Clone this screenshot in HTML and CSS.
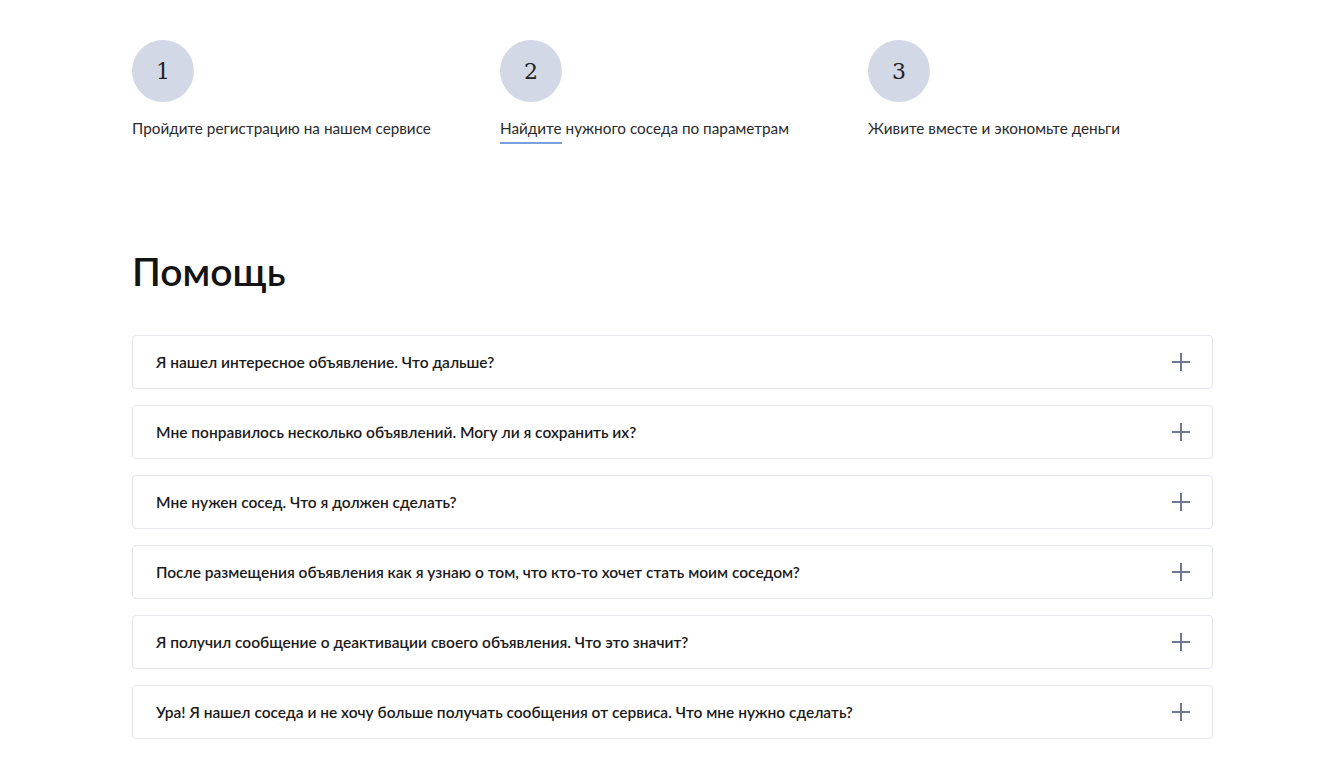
FILE: index.html
```html
<!DOCTYPE html>
<html lang="ru">
<head>
    <meta charset="UTF-8">
    <meta name="viewport" content="width=device-width, initial-scale=1.0">
    <title>Помощь</title>
    <link rel="stylesheet" href="styles.css">
</head>
<body>
    <div class="wrap">
        <div class="steps">
            <div class="step">
                <div class="num">1</div>
                <p>Пройдите регистрацию на нашем сервисе</p>
            </div>
            <div class="step">
                <div class="num">2</div>
                <p><a href="#">Найдите</a> нужного соседа по параметрам</p>
            </div>
            <div class="step">
                <div class="num">3</div>
                <p>Живите вместе и экономьте деньги</p>
            </div>
        </div>

        <h1>Помощь</h1>

        <div class="faq">
            <div class="item"><span>Я нашел интересное объявление. Что дальше?</span><i class="plus"></i></div>
            <div class="item"><span>Мне понравилось несколько объявлений. Могу ли я сохранить их?</span><i class="plus"></i></div>
            <div class="item"><span>Мне нужен сосед. Что я должен сделать?</span><i class="plus"></i></div>
            <div class="item"><span>После размещения объявления как я узнаю о том, что кто-то хочет стать моим соседом?</span><i class="plus"></i></div>
            <div class="item"><span>Я получил сообщение о деактивации своего объявления. Что это значит?</span><i class="plus"></i></div>
            <div class="item"><span>Ура! Я нашел соседа и не хочу больше получать сообщения от сервиса. Что мне нужно сделать?</span><i class="plus"></i></div>
        </div>
    </div>
</body>
</html>
```

FILE: styles.css
```css
body{
    margin: 0;
    background: #fff;
    font-family: Lato, "Open Sans", sans-serif;
    color: #1c1c1c;
}

.wrap{
    width: 1081px;
    margin-left: 132px;
    padding-top: 40px;
}

.steps{
    display: flex;
}

.step{
    flex: 0 0 368px;
}

.step .num{
    width: 62px;
    height: 62px;
    border-radius: 50%;
    background: #d3d8e6;
    display: flex;
    align-items: center;
    justify-content: center;
    font-family: "DejaVu Serif", serif;
    font-size: 22px;
    color: #222;
}

.step p{
    margin: 16px 0 0;
    font-size: 15.3px;
    line-height: 20px;
    color: #2a2a2a;
}

.step p a{
    color: inherit;
    text-decoration: none;
    border-bottom: 2px solid #7a9fdf;
    padding-bottom: 5px;
}

h1{
    margin: 108px 0 39px;
    font-size: 39px;
    font-weight: 600;
    line-height: 50px;
    color: #141414;
}

.faq{
    display: flex;
    flex-direction: column;
    gap: 16px;
}

.item{
    display: flex;
    align-items: center;
    justify-content: space-between;
    height: 52px;
    padding: 0 22px 0 23px;
    border: 1px solid #e3e5ef;
    border-radius: 4px;
    font-size: 15.5px;
    font-weight: 600;
    color: #1a1a1a;
}

.plus{
    position: relative;
    width: 18px;
    height: 18px;
}

.plus::before,
.plus::after{
    content: "";
    position: absolute;
    background: #6f7891;
}

.plus::before{
    left: 0;
    top: 8px;
    width: 18px;
    height: 2px;
}

.plus::after{
    top: 0;
    left: 8px;
    width: 2px;
    height: 18px;
}
```
